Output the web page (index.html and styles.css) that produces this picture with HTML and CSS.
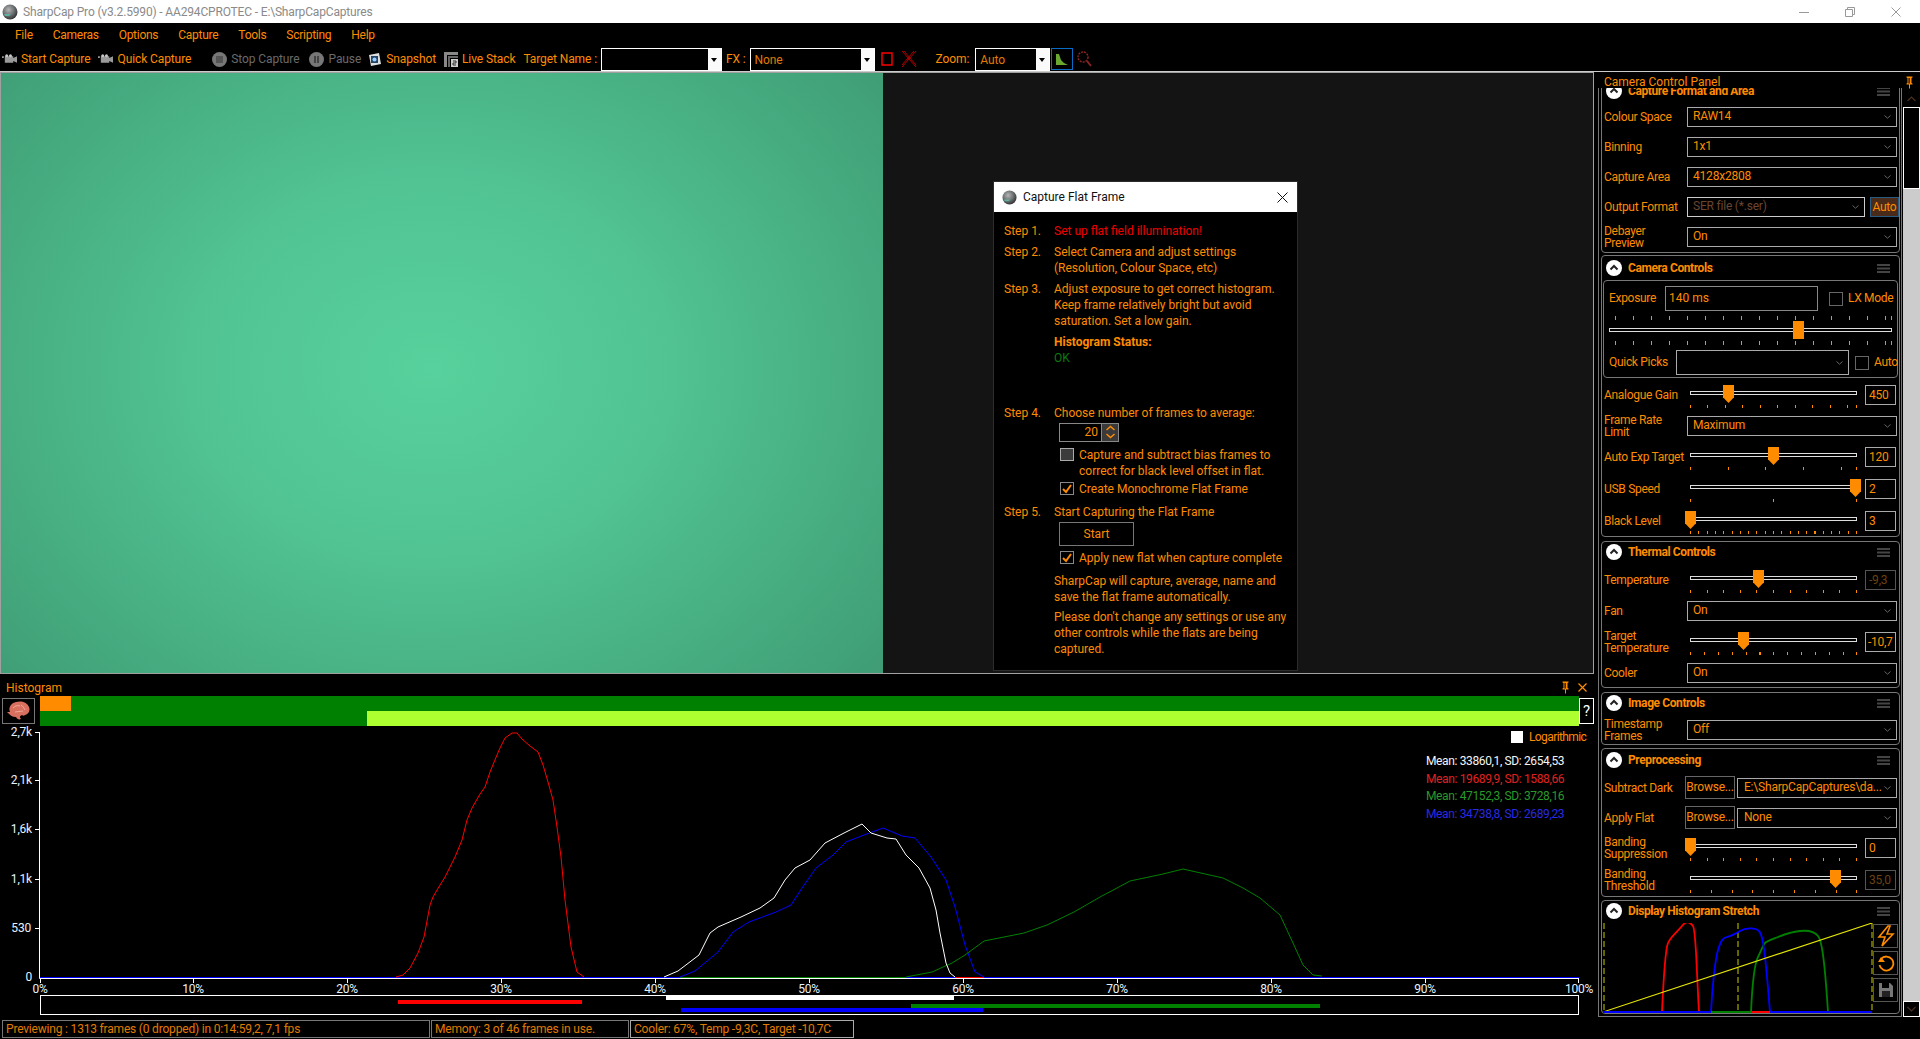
FILE: index.html
```html
<!DOCTYPE html>
<html>
<head>
   <title>SharpCap Pro</title>
   <link rel="stylesheet" href="styles.css">
</head>
<body>
   <svg class="defs" width="0" height="0">
       <defs>
           <radialGradient id="ballFill" cx="40%" cy="35%" r="70%">
               <stop offset="0" stop-color="#b5b5b5"/>
               <stop offset="0.55" stop-color="#6a6f70"/>
               <stop offset="1" stop-color="#2b2b2b"/>
           </radialGradient>
           <symbol id="ball" viewBox="0 0 16 16">
               <circle cx="8" cy="8" r="7.5" fill="url(#ballFill)"/>
               <path d="M2 10h7l-2 2H3z" fill="#5fb0a0"/>
           </symbol>
           <symbol id="cam" viewBox="0 0 16 12">
               <path d="M0 3h2v2h-2zM3 3h9v7h-9zM12 5l4-2v7l-4-2z" fill="#9a9a9a"/>
               <circle cx="5" cy="2.500" r="1.600" fill="#c8c8c8"/>
               <circle cx="9" cy="2.500" r="1.600" fill="#c8c8c8"/>
           </symbol>
           <symbol id="collapse" viewBox="0 0 16 16">
               <circle cx="8" cy="8" r="8" fill="#fff"/>
               <path d="M4.500 9.500 8 6l3.500 3.500" fill="none" stroke="#222" stroke-width="2"/>
           </symbol>
           <symbol id="menu" viewBox="0 0 13 9">
               <path d="M0 0h13v2H0zM0 3.500h13v2H0zM0 7h13v2H0z" fill="#444"/>
           </symbol>
           <symbol id="chev" viewBox="0 0 7 4">
               <path d="M.5 .5 3.500 3.200 6.500 .5" fill="none" stroke="#666" stroke-width="1"/>
           </symbol>
           <symbol id="pin" viewBox="0 0 9 13">
               <path d="M1.500 .5h6v1l-1 .5v5l1 .5v1h-2.500v4h-1v-4h-2.500v-1l1-.5v-5l-1-.5z" fill="#ff8c00"/>
               <rect x="3.500" y="2" width="1.200" height="5.500" fill="#000"/>
           </symbol>
       </defs>
   </svg>

   <header class="titlebar">
       <svg class="title-icon"><use href="#ball"/></svg>
       <span class="title-text">SharpCap Pro (v3.2.5990) - AA294CPROTEC - E:\SharpCapCaptures</span>
       <div class="win-controls">
           <svg width="10" height="10"><path d="M0 5.500h10" stroke="#999"/></svg>
           <svg width="10" height="10"><path d="M.5 2.500h7v7h-7zM2.500 2.500v-2h7v7h-2" fill="none" stroke="#999"/></svg>
           <svg width="10" height="10"><path d="M.5 .5l9 9M9.500 .5l-9 9" stroke="#999"/></svg>
       </div>
   </header>

   <nav class="menubar">
       <span>File</span><span>Cameras</span><span>Options</span><span>Capture</span><span>Tools</span><span>Scripting</span><span>Help</span>
   </nav>

   <div class="toolbar">
       <div class="tool"><svg class="tool-cam"><use href="#cam"/></svg>Start Capture</div>
       <div class="tool"><svg class="tool-cam"><use href="#cam"/></svg>Quick Capture</div>
       <div class="tool tool-off tool-stop">
           <svg width="15" height="15"><circle cx="7.500" cy="7.500" r="7.500" fill="#777"/><rect x="4" y="4" width="7" height="7" fill="#555"/></svg>Stop Capture
       </div>
       <div class="tool tool-off tool-pause">
           <svg width="15" height="15"><circle cx="7.500" cy="7.500" r="7.500" fill="#777"/><path d="M5 4h2v7H5zM8 4h2v7H8z" fill="#444"/></svg>Pause
       </div>
       <div class="tool">
           <svg width="14" height="14"><path d="M1 3l10-2 2 11-10 2z" fill="#ddd"/><rect x="3" y="4" width="7" height="7" fill="#246"/><circle cx="6.500" cy="7.500" r="2" fill="#9cf"/></svg>Snapshot
       </div>
       <div class="tool">
           <svg width="14" height="15"><path d="M0 0h14v3H3v12H0z" fill="#888"/><path d="M4 4h10v2H6v9H4z" fill="#666"/><rect x="7" y="7" width="7" height="8" fill="#ccc"/><path d="M9 9h3v2H9v2h3" fill="none" stroke="#333"/></svg>Live Stack
       </div>
       <span class="tool-label">Target Name :</span>
       <div class="drop drop-target"><span class="drop-value"></span><span class="drop-btn"></span></div>
       <span class="tool-label push-fx">FX :</span>
       <div class="drop drop-fx"><span class="drop-value">None</span><span class="drop-btn"></span></div>
       <svg class="tb-square" width="12" height="14"><path d="M1 1h10v12H1z" fill="none" stroke="#f00" stroke-width="1.400"/></svg>
       <svg class="tb-cross" width="16" height="18"><path d="M1 1l14 16M15 1 1 17M3 1l12 14M13 1 1 15" stroke="#a00" fill="none"/></svg>
       <span class="tool-label push-zoom">Zoom:</span>
       <div class="drop drop-zoom"><span class="drop-value">Auto</span><span class="drop-btn"></span></div>
       <div class="hist-toggle">
           <svg width="14" height="14"><path d="M1 13V2l3 0 2 6 3 3 4 2z" fill="#6aa832"/></svg>
       </div>
       <svg class="tb-mag" width="15" height="16"><circle cx="6" cy="6" r="5" fill="none" stroke="#822" stroke-dasharray="2 1" stroke-width="1.500"/><path d="M10 10l4 5" stroke="#822" stroke-width="2"/></svg>
   </div>

   <div class="main">
       <div class="left-col">
           <section class="viewer">
               <div class="flat-image"></div>

               <div class="dialog">
                   <div class="dialog-title">
                       <svg class="dialog-icon"><use href="#ball"/></svg>
                       <span>Capture Flat Frame</span>
                       <svg class="dialog-close" width="11" height="11"><path d="M.5 .5l10 10M10.500 .5l-10 10" stroke="#111"/></svg>
                   </div>
                   <div class="dialog-body">
                       <div class="step"><span class="step-no">Step 1.</span><div class="step-main alert">Set up flat field illumination!</div></div>
                       <div class="step"><span class="step-no">Step 2.</span><div class="step-main">Select Camera and adjust settings<br>(Resolution, Colour Space, etc)</div></div>
                       <div class="step"><span class="step-no">Step 3.</span><div class="step-main">Adjust exposure to get correct histogram.<br>Keep frame relatively bright but avoid<br>saturation. Set a low gain.</div></div>
                       <div class="step"><span class="step-no"></span><div class="step-main"><b>Histogram Status:</b><br><span class="ok">OK</span></div></div>
                       <div class="step step-4"><span class="step-no">Step 4.</span><div class="step-main">Choose number of frames to average:</div></div>
                       <div class="indent">
                           <div class="spinner">
                               <span class="spin-value">20</span>
                               <span class="spin-btns">
                                   <svg width="11" height="8"><path d="M1.500 6 5.500 2.500 9.500 6" fill="none" stroke="#ff8c00" stroke-width="1.500"/></svg>
                                   <svg width="11" height="8"><path d="M1.500 2 5.500 5.500 9.500 2" fill="none" stroke="#ff8c00" stroke-width="1.500"/></svg>
                               </span>
                           </div>
                           <label class="check check-first"><span class="box box-off"></span><span>Capture and subtract bias frames to<br>correct for black level offset in flat.</span></label>
                           <label class="check"><span class="box"><svg width="12" height="12"><path d="M2 6l3 3 5-7" fill="none" stroke="#ff8c00" stroke-width="2"/></svg></span><span>Create Monochrome Flat Frame</span></label>
                       </div>
                       <div class="step step-5"><span class="step-no">Step 5.</span><div class="step-main">Start Capturing the Flat Frame</div></div>
                       <div class="indent">
                           <div class="start-btn">Start</div>
                           <label class="check check-apply"><span class="box"><svg width="12" height="12"><path d="M2 6l3 3 5-7" fill="none" stroke="#ff8c00" stroke-width="2"/></svg></span><span>Apply new flat when capture complete</span></label>
                       </div>
                       <p class="note note-first">SharpCap will capture, average, name and<br>save the flat frame automatically.</p>
                       <p class="note">Please don't change any settings or use any<br>other controls while the flats are being<br>captured.</p>
                   </div>
               </div>
           </section>

           <section class="histogram">
               <div class="hist-head">
                   <span>Histogram</span>
                   <div class="hist-head-icons">
                       <svg width="9" height="13"><use href="#pin"/></svg>
                       <svg width="9" height="9"><path d="M.5 .5l8 8M8.500 .5l-8 8" stroke="#ff8c00" stroke-width="1.200"/></svg>
                   </div>
               </div>
               <div class="hist-bars">
                   <div class="brain-btn">
                       <svg width="24" height="20" viewBox="0 0 24 20"><path d="M3 11C1 7 4 2 9 1c5-1.500 11 0 13 5 1.500 4-.5 7-4 8-1 1-2 1-3 0-2 1-3 2-1 4-2 1-4 0-5-2-4 0-6-2-9-5z" fill="#d9705f"/><path d="M6 7c2-2 4-3 7-2M8 11c3 0 5-1 8-1M14 4c2 1 3 3 4 5" fill="none" stroke="#efa898"/></svg>
                   </div>
                   <div class="level-bars">
                       <div class="level-orange"></div>
                       <div class="level-lime"></div>
                   </div>
                   <div class="help-btn">?</div>
               </div>

               <div class="plot">
                   <svg class="plot-svg" viewBox="0 726 1598 292" width="1598" height="292">
                       <path d="M39.500 732V978.500H1579" fill="none" stroke="#fff"/>
                       <path d="M35 732.500h4M35 780.500h4M35 829.500h4M35 879.500h4M35 928.500h4" stroke="#fff"/>
                       <path d="M40.500 979v4M193.500 979v4M347.500 979v4M501.500 979v4M655.500 979v4M809.500 979v4M963.500 979v4M1117.500 979v4M1271.500 979v4M1425.500 979v4M1578.500 979v4" stroke="#fff"/>
                       <g class="y-labels">
                           <text x="32" y="736">2,7k</text>
                           <text x="32" y="784">2,1k</text>
                           <text x="32" y="833">1,6k</text>
                           <text x="32" y="883">1,1k</text>
                           <text x="31" y="932">530</text>
                           <text x="32" y="981">0</text>
                       </g>
                       <g class="x-labels">
                           <text x="40" y="993">0%</text>
                           <text x="193" y="993">10%</text>
                           <text x="347" y="993">20%</text>
                           <text x="501" y="993">30%</text>
                           <text x="655" y="993">40%</text>
                           <text x="809" y="993">50%</text>
                           <text x="963" y="993">60%</text>
                           <text x="1117" y="993">70%</text>
                           <text x="1271" y="993">80%</text>
                           <text x="1425" y="993">90%</text>
                           <text x="1579" y="993">100%</text>
                       </g>
                       <path d="M40 977.500H1579" stroke="#0000ff"/>
                       <path d="M680 977.500H906" stroke="#008000"/>
                       <path d="M955 977.500H984" stroke="#ff0000"/>
                       <polyline fill="none" stroke="#ff0000" points="396,977 403,975 410,968 418,953 424,937 430,905 433,897 437,890 445,877 455,857 462,840 467,820 472,808 480,794 485,787 490,772 497,755 500,748 505,738 512,733 517,733 522,739 530,746 538,752 543,765 548,782 553,800 557,827 561,857 565,900 571,947 577,972 584,977"/>
                       <polyline fill="none" stroke="#0000ff" points="680,977 695,971 718,952 733,932 749,922 776,912 791,905 802,888 816,868 833,855 846,842 864,835 883,828 902,836 915,838 931,857 946,880 955,907 965,945 975,972 984,977"/>
                       <polyline fill="none" stroke="#008000" points="906,977 932,972 952,963 965,955 984,941 1024,933 1047,925 1074,912 1100,897 1117,888 1130,881 1163,874 1183,869 1223,878 1243,888 1260,898 1280,915 1293,943 1303,965 1313,975 1322,976"/>
                       <polyline fill="none" stroke="#ffffff" points="664,977 678,971 699,955 710,933 718,927 741,917 760,908 774,898 785,880 795,868 810,860 825,843 844,833 862,824 871,833 887,838 896,839 906,855 919,868 930,888 936,910 940,933 946,963 950,973 955,977"/>
                       <rect x="40.500" y="995.500" width="1538" height="19" fill="none" stroke="#fff"/>
                       <rect x="666" y="995" width="288" height="5" fill="#fff"/>
                       <rect x="398" y="1000" width="184" height="4" fill="#ff0000"/>
                       <rect x="911" y="1004" width="409" height="4" fill="#008000"/>
                       <rect x="681" y="1008" width="302" height="4" fill="#0000ff"/>
                   </svg>
                   <div class="log-toggle"><span class="log-box"></span><span class="log-text">Logarithmic</span></div>
                   <div class="stats">
                       <div class="stat-white">Mean: 33860,1, SD: 2654,53</div>
                       <div class="stat-red">Mean: 19689,9, SD: 1588,66</div>
                       <div class="stat-green">Mean: 47152,3, SD: 3728,16</div>
                       <div class="stat-blue">Mean: 34738,8, SD: 2689,23</div>
                   </div>
               </div>
           </section>

           <footer class="statusbar">
               <div class="status-cell status-a">Previewing : 1313 frames (0 dropped) in 0:14:59,2, 7,1 fps</div>
               <div class="status-cell status-b">Memory: 3 of 46 frames in use.</div>
               <div class="status-cell status-c">Cooler: 67%, Temp -9,3C, Target -10,7C</div>
           </footer>
       </div>

       <aside class="panel">
           <div class="panel-head">
               <span>Camera Control Panel</span>
               <svg width="9" height="13"><use href="#pin"/></svg>
           </div>
           <div class="panel-scroll">
               <div class="sections">
                   <div class="section sec-format">
                       <div class="sec-head"><svg class="sec-icon"><use href="#collapse"/></svg><b>Capture Format and Area</b><svg class="sec-menu"><use href="#menu"/></svg></div>
                       <div class="row gap-10"><span class="lbl">Colour Space</span><div class="combo"><span>RAW14</span><svg class="chev"><use href="#chev"/></svg></div></div>
                       <div class="row gap-10"><span class="lbl">Binning</span><div class="combo"><span>1x1</span><svg class="chev"><use href="#chev"/></svg></div></div>
                       <div class="row gap-10"><span class="lbl">Capture Area</span><div class="combo"><span>4128x2808</span><svg class="chev"><use href="#chev"/></svg></div></div>
                       <div class="row gap-10"><span class="lbl">Output Format</span><div class="combo combo-dim"><span>SER file (*.ser)</span><svg class="chev"><use href="#chev"/></svg></div><div class="auto-btn">Auto</div></div>
                       <div class="row"><span class="lbl lbl-two">Debayer<br>Preview</span><div class="combo"><span>On</span><svg class="chev"><use href="#chev"/></svg></div></div>
                   </div>

                   <div class="section sec-camera">
                       <div class="sec-head"><svg class="sec-icon"><use href="#collapse"/></svg><b>Camera Controls</b><svg class="sec-menu"><use href="#menu"/></svg></div>
                       <div class="group">
                           <div class="exp-row">
                               <span class="exp-lbl">Exposure</span>
                               <div class="exp-input">140 ms</div>
                               <span class="tick-box"></span>
                               <span class="tick-text">LX Mode</span>
                           </div>
                           <div class="exp-slider">
                               <div class="ticks ticks-exp"></div>
                               <div class="track"></div>
                               <div class="thumb thumb-rect" style="left: 184px"></div>
                               <div class="ticks ticks-exp"></div>
                           </div>
                           <div class="pick-row">
                               <span class="pick-lbl">Quick Picks</span>
                               <div class="combo combo-pick"><span></span><svg class="chev"><use href="#chev"/></svg></div>
                               <span class="tick-box tick-box-pick"></span>
                               <span class="tick-text">Auto</span>
                           </div>
                       </div>
                       <div class="row-slider gap-7 first-after-group">
                           <span class="lbl">Analogue Gain</span>
                           <div class="slider" style="--s: 17.5px"><div class="track"></div><div class="thumb" style="left: 33px"></div><div class="ticks"></div></div>
                           <div class="num">450</div>
                       </div>
                       <div class="row gap-11"><span class="lbl lbl-two">Frame Rate<br>Limit</span><div class="combo"><span>Maximum</span><svg class="chev"><use href="#chev"/></svg></div></div>
                       <div class="row-slider gap-8">
                           <span class="lbl">Auto Exp Target</span>
                           <div class="slider" style="--s: 37.7px"><div class="track"></div><div class="thumb" style="left: 78px"></div><div class="ticks"></div></div>
                           <div class="num">120</div>
                       </div>
                       <div class="row-slider gap-8">
                           <span class="lbl">USB Speed</span>
                           <div class="slider" style="--s: 83px"><div class="track"></div><div class="thumb" style="left: 160px"></div><div class="ticks"></div></div>
                           <div class="num num-left">2</div>
                       </div>
                       <div class="row-slider">
                           <span class="lbl">Black Level</span>
                           <div class="slider" style="--s: 8.3px"><div class="track"></div><div class="thumb" style="left: -5px"></div><div class="ticks"></div></div>
                           <div class="num num-left">3</div>
                       </div>
                   </div>

                   <div class="section sec-thermal">
                       <div class="sec-head"><svg class="sec-icon"><use href="#collapse"/></svg><b>Thermal Controls</b><svg class="sec-menu"><use href="#menu"/></svg></div>
                       <div class="row-slider gap-7">
                           <span class="lbl">Temperature</span>
                           <div class="slider" style="--s: 16.6px"><div class="track"></div><div class="thumb" style="left: 63px"></div><div class="ticks"></div></div>
                           <div class="num num-off">-9,3</div>
                       </div>
                       <div class="row gap-11"><span class="lbl">Fan</span><div class="combo"><span>On</span><svg class="chev"><use href="#chev"/></svg></div></div>
                       <div class="row-slider gap-7">
                           <span class="lbl lbl-two">Target<br>Temperature</span>
                           <div class="slider" style="--s: 13.9px"><div class="track"></div><div class="thumb" style="left: 48px"></div><div class="ticks"></div></div>
                           <div class="num num-wide">-10,7</div>
                       </div>
                       <div class="row"><span class="lbl">Cooler</span><div class="combo"><span>On</span><svg class="chev"><use href="#chev"/></svg></div></div>
                   </div>

                   <div class="section sec-image">
                       <div class="sec-head"><svg class="sec-icon"><use href="#collapse"/></svg><b>Image Controls</b><svg class="sec-menu"><use href="#menu"/></svg></div>
                       <div class="row"><span class="lbl lbl-two">Timestamp<br>Frames</span><div class="combo"><span>Off</span><svg class="chev"><use href="#chev"/></svg></div></div>
                   </div>

                   <div class="section sec-pre">
                       <div class="sec-head"><svg class="sec-icon"><use href="#collapse"/></svg><b>Preprocessing</b><svg class="sec-menu"><use href="#menu"/></svg></div>
                       <div class="row-browse gap-7"><span class="lbl lbl-short">Subtract Dark</span><div class="browse">Browse...</div><div class="combo combo-file"><span>E:\SharpCapCaptures\da...</span><svg class="chev"><use href="#chev"/></svg></div></div>
                       <div class="row-browse gap-9"><span class="lbl lbl-short">Apply Flat</span><div class="browse">Browse...</div><div class="combo combo-file"><span>None</span><svg class="chev"><use href="#chev"/></svg></div></div>
                       <div class="row-slider gap-8">
                           <span class="lbl lbl-two">Banding<br>Suppression</span>
                           <div class="slider" style="--s: 16.6px"><div class="track"></div><div class="thumb" style="left: -5px"></div><div class="ticks"></div></div>
                           <div class="num num-left">0</div>
                       </div>
                       <div class="row-slider">
                           <span class="lbl lbl-two">Banding<br>Threshold</span>
                           <div class="slider" style="--s: 20.8px"><div class="track"></div><div class="thumb" style="left: 140px"></div><div class="ticks"></div></div>
                           <div class="num num-off">35,0</div>
                       </div>
                   </div>

                   <div class="section sec-stretch">
                       <div class="sec-head"><svg class="sec-icon"><use href="#collapse"/></svg><b>Display Histogram Stretch</b><svg class="sec-menu"><use href="#menu"/></svg></div>
                       <div class="stretch">
                           <svg class="stretch-svg" viewBox="1603 923 270 90" width="270" height="90">
                               <path d="M1604 923V1012M1738 923V1012M1872 923V1012" stroke="#666600" stroke-width="2" stroke-dasharray="6 3"/>
                               <path d="M1662 1012C1663 990 1665 950 1668 943S1677 932 1682 926 1690 922 1693 926 1696 960 1699 1012" fill="none" stroke="#ff0000" stroke-width="1.800"/>
                               <path d="M1751 1012C1752 990 1754 965 1758 957S1763 945 1765 943 1773 939 1778 937 1790 932 1800 931 1815 932 1818 936 1824 950 1828 1012" fill="none" stroke="#008000" stroke-width="1.800"/>
                               <path d="M1711 1012C1712 990 1715 960 1718 950S1723 938 1727 937 1735 934 1740 931 1755 927 1759 931 1765 950 1770 1012" fill="none" stroke="#0000ff" stroke-width="1.800"/>
                               <path d="M1603 1012 1872 923" stroke="#e8e800" stroke-width="1.100"/>
                               <path d="M1603 1012H1711" stroke="#0000ff" stroke-width="2"/>
                               <path d="M1711 1012H1751" stroke="#008000" stroke-width="2"/>
                               <path d="M1751 1012H1770" stroke="#ff0000" stroke-width="2"/>
                               <path d="M1770 1012H1872" stroke="#0000ff" stroke-width="2"/>
                           </svg>
                           <div class="stretch-btns">
                               <div class="stretch-btn"><svg width="18" height="22" viewBox="0 0 18 22"><path d="M11 1 2 12h6l-3 9 11-12h-6l3-8z" fill="none" stroke="#ff8c00" stroke-width="1.600"/></svg></div>
                               <div class="stretch-btn"><svg width="18" height="18" viewBox="0 0 18 18"><path d="M4 5a7 7 0 1 1-1.500 6" fill="none" stroke="#ff8c00" stroke-width="1.800"/><path d="M1 8h7L4 3z" fill="#ff8c00"/></svg></div>
                               <div class="stretch-btn"><svg width="16" height="16" viewBox="0 0 16 16"><path d="M1 1h11l3 3v11H1z" fill="#777"/><rect x="4" y="1" width="7" height="5" fill="#000"/><rect x="4" y="9" width="8" height="6" fill="#222"/></svg></div>
                           </div>
                       </div>
                   </div>
               </div>

               <div class="scrollbar">
                   <div class="sb-btn"><svg width="9" height="6"><path d="M.5 5 4.500 1 8.500 5" fill="none" stroke="#4a3020" stroke-width="1.200"/></svg></div>
                   <div class="sb-thumb"></div>
                   <div class="sb-track"></div>
                   <div class="sb-btn sb-btn-down"><svg width="9" height="6"><path d="M.5 1 4.500 5 8.500 1" fill="none" stroke="#4a3020" stroke-width="1.200"/></svg></div>
               </div>
           </div>
       </aside>
   </div>
</body>
</html>
```

FILE: styles.css
```css
* {
    margin: 0;
    padding: 0;
    box-sizing: border-box;
}

body {
    width: 1920px;
    height: 1039px;
    overflow: hidden;
    background: #000;
    color: #ff8c00;
    font-family: Roboto, "Liberation Sans", sans-serif;
    font-size: 12px;
    line-height: 16px;
    display: flex;
    flex-direction: column;
}

.defs {
    position: absolute;
}

/* window chrome */
.titlebar {
    height: 23px;
    background: #fff;
    color: #8a8a8a;
    display: flex;
    align-items: center;
    padding-left: 2px;
    letter-spacing: -0.16px;
}

.title-icon {
    width: 16px;
    height: 16px;
    margin-right: 5px;
}

.win-controls {
    margin-left: auto;
    display: flex;
    gap: 36px;
    padding-right: 19px;
}

.menubar {
    height: 24px;
    display: flex;
    align-items: center;
    gap: 20px;
    padding-left: 15px;
    letter-spacing: -0.27px;
}

.toolbar {
    height: 24px;
    display: flex;
    align-items: center;
    padding-left: 2px;
    letter-spacing: -0.1px;
}

.tool {
    display: flex;
    align-items: center;
    gap: 4px;
    margin-right: 8px;
    white-space: nowrap;
}

.tool-cam {
    width: 15px;
    height: 12px;
}

.tool-off {
    color: #6a6a6a;
}

.tool-stop {
    margin-left: 13px;
    margin-right: 10px;
}

.tool-pause {
    margin-right: 7px;
}

.tool-label {
    white-space: nowrap;
}

.drop {
    height: 23px;
    display: flex;
    border: 1px solid #fff;
    margin-left: 4px;
}

.drop-value {
    flex: 1;
    padding: 3px 0 0 4px;
    color: #e07b00;
}

.drop-btn {
    width: 13px;
    background: #fafafa;
    position: relative;
}

.drop-btn::after {
    content: "";
    position: absolute;
    left: 3px;
    top: 9px;
    border: 3px solid transparent;
    border-top: 4px solid #000;
    border-bottom: 0;
}

.drop-target {
    width: 121px;
}

.drop-fx {
    width: 125px;
}

.drop-zoom {
    width: 75px;
    margin-left: 6px;
}

.push-fx {
    margin-left: 4px;
}

.push-zoom {
    margin-left: 19px;
}

.tb-square {
    margin-left: 6px;
}

.tb-cross {
    margin-left: 8px;
}

.hist-toggle {
    width: 22px;
    height: 22px;
    border: 1px solid #0a6cc4;
    margin-left: 1px;
    display: flex;
    align-items: center;
    justify-content: center;
}

.tb-mag {
    margin-left: 4px;
}

/* main area */
.main {
    flex: 1;
    display: flex;
    border-top: 1px solid #ccc;
    min-height: 0;
}

.left-col {
    width: 1598px;
    display: flex;
    flex-direction: column;
}

.viewer {
    width: 1594px;
    height: 602px;
    background: #141414;
    border: 1px solid #a0a0a0;
    position: relative;
}

.flat-image {
    width: 882px;
    height: 600px;
    background: radial-gradient(ellipse 640px 520px at 430px 295px, #57d19d 0%, #52c494 35%, #46ac80 70%, #3d9670 100%);
}

/* flat frame dialog */
.dialog {
    position: absolute;
    left: 992px;
    top: 108px;
    width: 305px;
    height: 490px;
    background: #000;
    border: 1px solid #2c2c2c;
}

.dialog-title {
    height: 30px;
    background: #fff;
    color: #111;
    display: flex;
    align-items: center;
    padding-left: 8px;
}

.dialog-icon {
    width: 15px;
    height: 15px;
    margin-right: 6px;
}

.dialog-close {
    margin-left: auto;
    margin-right: 9px;
}

.dialog-body {
    padding: 11px 0 0 10px;
}

.step {
    display: flex;
    margin-bottom: 5px;
}

.step-no {
    width: 50px;
}

.step-main {
    flex: 1;
}

.alert {
    color: #f00000;
}

.ok {
    color: #0b7a0b;
}

.step-4 {
    margin-top: 39px;
    margin-bottom: 2px;
}

.step-5 {
    margin-top: 7px;
    margin-bottom: 2px;
}

.indent {
    margin-left: 55px;
}

.spinner {
    width: 60px;
    height: 19px;
    border: 1px solid #888;
    display: flex;
}

.spin-value {
    flex: 1;
    text-align: right;
    padding-right: 3px;
}

.spin-btns {
    width: 17px;
    background: #3a3a3a;
    border-left: 1px solid #888;
    display: flex;
    flex-direction: column;
    align-items: center;
}

.check {
    display: flex;
    gap: 5px;
    margin-bottom: 3px;
    margin-left: 1px;
}

.check-first {
    margin-top: 5px;
    margin-bottom: 2px;
}

.check-apply {
    margin-top: 4px;
}

.box {
    width: 14px;
    height: 13px;
    border: 1px solid #888;
    margin-top: 1px;
    display: flex;
    align-items: center;
    justify-content: center;
    flex-shrink: 0;
}

.box-off {
    background: #3c3c3c;
    border-color: #aaa;
}

.start-btn {
    width: 75px;
    height: 24px;
    border: 1px solid #777;
    text-align: center;
    line-height: 22px;
}

.note {
    margin-left: 50px;
    margin-bottom: 4px;
    white-space: nowrap;
}

.note-first {
    margin-top: 7px;
}

/* histogram */
.histogram {
    height: 346px;
    position: relative;
}

.hist-head {
    height: 22px;
    display: flex;
    justify-content: space-between;
    padding: 6px 8px 0 6px;
}

.hist-head-icons {
    display: flex;
    gap: 8px;
    padding-right: 3px;
    padding-bottom: 2px;
    align-items: center;
}

.hist-bars {
    height: 30px;
    display: flex;
    align-items: center;
    padding-left: 2px;
    width: 1594px;
}

.brain-btn {
    width: 33px;
    height: 26px;
    border: 1px solid #777;
    margin-right: 5px;
    display: flex;
    align-items: center;
    justify-content: center;
}

.level-bars {
    width: 1539px;
    height: 30px;
    background: #008000;
    position: relative;
}

.level-orange {
    position: absolute;
    left: 0;
    top: 0;
    width: 31px;
    height: 15px;
    background: #ff8c00;
}

.level-lime {
    position: absolute;
    left: 327px;
    right: 0;
    top: 15px;
    height: 15px;
    background: #adff2f;
}

.help-btn {
    width: 15px;
    height: 26px;
    border: 1px solid #fff;
    color: #fff;
    font-size: 15px;
    line-height: 24px;
    text-align: center;
}

.plot {
    position: relative;
    height: 292px;
}

.plot-svg {
    display: block;
}

.plot-svg text {
    font-family: Roboto, "Liberation Sans", sans-serif;
    font-size: 12px;
    letter-spacing: -0.2px;
    fill: #e8f2ff;
}

.y-labels text {
    text-anchor: end;
}

.x-labels text {
    text-anchor: middle;
}

.log-toggle {
    position: absolute;
    left: 1511px;
    top: 3px;
    display: flex;
    align-items: center;
    gap: 6px;
}

.log-text {
    letter-spacing: -0.6px;
}

.log-box {
    width: 12px;
    height: 12px;
    background: #fff;
}

.stats {
    position: absolute;
    left: 1426px;
    top: 27px;
    line-height: 17.5px;
    letter-spacing: -0.37px;
    white-space: nowrap;
}

.stat-white {
    color: #f4f4f4;
}

.stat-red {
    color: #e02020;
}

.stat-green {
    color: #2a9a2a;
}

.stat-blue {
    color: #2a2ae0;
}

.statusbar {
    height: 18px;
    display: flex;
    padding-left: 2px;
    gap: 1px;
}

.status-cell {
    border: 1px solid #777;
    padding-left: 3px;
    line-height: 16px;
    color: #e07b00;
    white-space: nowrap;
    letter-spacing: -0.19px;
}

.status-a {
    width: 428px;
}

.status-b {
    width: 198px;
}

.status-c {
    width: 224px;
    border-color: #aaa;
}

/* camera control panel */
.panel {
    width: 322px;
    display: flex;
    flex-direction: column;
}

.panel-head {
    height: 16px;
    display: flex;
    justify-content: space-between;
    align-items: center;
    padding: 4px 6px 0 6px;
}

.panel-scroll {
    height: 929px;
    display: flex;
    overflow: hidden;
}

.sections {
    width: 305px;
    border: 1px solid #777;
    border-top: 0;
    padding: 0 1px 0 2px;
    overflow: hidden;
}

.section {
    border: 1px solid #777;
    border-radius: 4px;
    padding: 0 2px;
}

.sec-format {
    margin-top: -10px;
    padding-bottom: 5px;
    margin-bottom: 2px;
}

.sec-format .sec-head {
    margin-bottom: 4px;
}

.sec-camera {
    margin-bottom: 4px;
    padding-bottom: 1px;
}

.sec-thermal {
    margin-bottom: 4px;
    padding-bottom: 4px;
}

.sec-thermal .sec-head {
    height: 20px;
    margin-bottom: 8px;
}

.sec-image {
    margin-bottom: 3px;
    padding-bottom: 4px;
}

.sec-image .sec-head {
    height: 20px;
    margin-bottom: 7px;
}

.sec-pre {
    margin-bottom: 3px;
    padding-bottom: 2px;
}

.sec-pre .sec-head {
    height: 22px;
    margin-bottom: 5px;
}

.sec-stretch .sec-head {
    height: 20px;
    margin-bottom: 4px;
}

.sec-head {
    height: 24px;
    display: flex;
    align-items: center;
    margin: 0 -2px;
    padding: 0 9px 0 4px;
}

.sec-head b {
    letter-spacing: -0.4px;
}

.sec-icon {
    width: 16px;
    height: 16px;
    margin-right: 6px;
}

.sec-menu {
    width: 13px;
    height: 9px;
    margin-left: auto;
}

.row {
    height: 20px;
    display: flex;
    align-items: center;
}

.row-browse {
    height: 23px;
    display: flex;
    align-items: center;
}

.row-slider {
    height: 24px;
    display: flex;
    align-items: flex-start;
}

.gap-7 {
    margin-bottom: 7px;
}

.gap-8 {
    margin-bottom: 8px;
}

.gap-9 {
    margin-bottom: 9px;
}

.gap-10 {
    margin-bottom: 10px;
}

.gap-11 {
    margin-bottom: 11px;
}

.lbl {
    width: 83px;
    flex-shrink: 0;
    white-space: nowrap;
    letter-spacing: -0.3px;
}

.row-slider .lbl {
    padding-top: 2px;
}

.lbl-two {
    line-height: 12px;
}

.row-slider .lbl-two {
    padding-top: 0;
    margin-top: -2px;
}

.lbl-short {
    width: 81px;
}

.combo {
    flex: 1;
    height: 20px;
    border: 1px solid #aaa;
    display: flex;
    align-items: center;
    justify-content: space-between;
    padding: 0 5px 2px 5px;
    white-space: nowrap;
    letter-spacing: -0.2px;
}

.chev {
    width: 7px;
    height: 4px;
    margin-top: 2px;
}

.combo-dim {
    flex: none;
    width: 178px;
    color: #6a4630;
    border-color: #ccc;
}

.auto-btn {
    width: 29px;
    height: 20px;
    margin-left: 5px;
    background: #4a2a18;
    border: 1px solid #2a5a80;
    line-height: 18px;
    text-align: center;
    margin-right: -2px;
    letter-spacing: -0.3px;
}

.group {
    height: 98px;
    margin: 0 -1px;
    border: 1px solid #777;
    border-radius: 4px;
    padding: 5px 0 0 5px;
}

.first-after-group {
    margin-top: 7px;
}

.exp-row {
    height: 25px;
    display: flex;
    align-items: center;
}

.exp-lbl {
    width: 56px;
    flex-shrink: 0;
    padding-bottom: 2px;
    letter-spacing: -0.3px;
}

.exp-input {
    width: 153px;
    height: 25px;
    border: 1px solid #888;
    padding: 3px 0 0 3px;
    margin-right: 11px;
    flex-shrink: 0;
}

.tick-box {
    width: 14px;
    height: 14px;
    border: 1px solid #666;
    margin-right: 5px;
    flex-shrink: 0;
}

.tick-text {
    letter-spacing: -0.3px;
    padding-bottom: 2px;
    white-space: nowrap;
}

.exp-slider {
    position: relative;
    width: 283px;
    height: 29px;
    margin-top: 5px;
    display: flex;
    flex-direction: column;
    justify-content: space-between;
}

.pick-row {
    height: 25px;
    margin-top: 5px;
    display: flex;
    align-items: center;
}

.pick-lbl {
    width: 67px;
    flex-shrink: 0;
    padding-bottom: 2px;
    letter-spacing: -0.3px;
}

.combo-pick {
    flex: none;
    width: 173px;
    height: 25px;
}

.tick-box-pick {
    margin-left: 6px;
}

.slider {
    position: relative;
    width: 167px;
    height: 24px;
    margin-left: 3px;
    flex-shrink: 0;
}

.track {
    position: absolute;
    left: 0;
    right: 0;
    top: 6px;
    height: 4px;
    background: #000;
    border: 1px solid #ddd;
}

.exp-slider .track {
    top: 12px;
}

.thumb {
    position: absolute;
    top: 0;
    width: 11px;
    height: 18px;
    background: #ff8c00;
    clip-path: polygon(0 0, 100% 0, 100% 68%, 50% 100%, 0 68%);
}

.thumb-rect {
    top: 5px;
    clip-path: none;
}

.ticks {
    position: absolute;
    left: 0;
    right: 0;
    top: 20px;
    height: 3px;
    background: repeating-linear-gradient(to right, #ff8c00 0 1px, transparent 1px var(--s));
}

.ticks::after {
    content: "";
    position: absolute;
    right: 0;
    top: 0;
    width: 1px;
    height: 3px;
    background: #ff8c00;
}

.ticks-exp {
    position: relative;
    top: 0;
    height: 4px;
    background: repeating-linear-gradient(to right, transparent 0 6px, #ff8c00 6px 7px, transparent 7px 18px);
}

.ticks-exp::after {
    height: 4px;
}

.num {
    width: 31px;
    height: 20px;
    margin-left: 8px;
    border: 1px solid #aaa;
    line-height: 18px;
    padding-left: 3px;
    white-space: nowrap;
    letter-spacing: -0.2px;
}

.num-off {
    border-color: #555;
    color: #6b4210;
}

.num-wide {
    letter-spacing: -0.3px;
    padding-left: 2px;
}

.browse {
    width: 50px;
    height: 23px;
    border: 1px solid #666;
    line-height: 21px;
    text-align: center;
    margin-right: 2px;
    flex-shrink: 0;
    white-space: nowrap;
    overflow: hidden;
    letter-spacing: -0.2px;
}

.combo-file {
    flex: none;
    width: 160px;
    overflow: hidden;
}

.combo-file span {
    padding-left: 1px;
}

.stretch {
    display: flex;
    margin: -2px -2px 0 0;
    height: 90px;
}

.stretch-svg {
    display: block;
    margin-left: -1px;
}

.stretch-btns {
    display: flex;
    flex-direction: column;
    gap: 3px;
    padding-top: 1px;
}

.stretch-btn {
    width: 25px;
    height: 24px;
    border: 1px solid #555;
    display: flex;
    align-items: center;
    justify-content: center;
}

.scrollbar {
    width: 17px;
    margin-left: 1px;
    padding-top: 3px;
    display: flex;
    flex-direction: column;
    height: 929px;
}

.sb-btn {
    height: 16px;
    flex-shrink: 0;
    display: flex;
    align-items: center;
    justify-content: center;
}

.sb-thumb {
    height: 82px;
    border: 1px solid #fff;
    flex-shrink: 0;
}

.sb-track {
    flex: 1;
    background: #ccc;
}

.sb-btn-down {
    border: 1px solid #fff;
}
```
